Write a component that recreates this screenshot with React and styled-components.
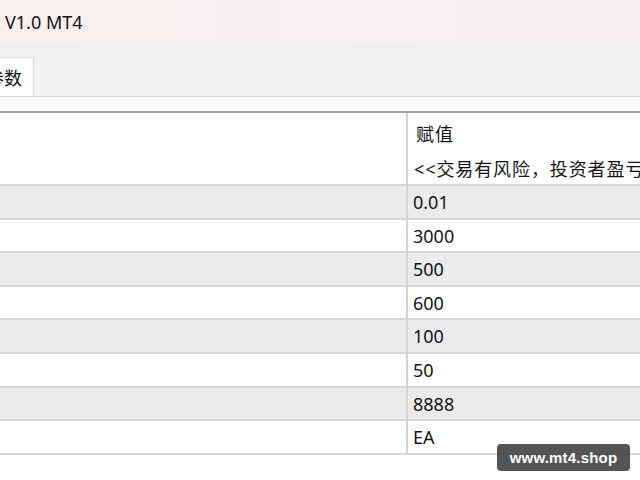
import React from "react";
import styled, { createGlobalStyle } from "styled-components";

const GlobalStyle = createGlobalStyle`
  html, body {
    margin: 0;
    padding: 0;
    background: #ffffff;
    overflow: hidden;
  }
  body {
    font-family: "Noto Sans", "Noto Sans CJK SC", sans-serif;
    color: #141414;
  }
`;

const Window = styled.div`
  position: relative;
  width: 640px;
  height: 480px;
  overflow: hidden;
  background: #ffffff;
`;

const TitleBar = styled.div`
  height: 43px;
  display: flex;
  align-items: center;
  padding-left: 5px;
  font-size: 18px;
  background: linear-gradient(90deg, #f9efee 0%, #f9eef0 60%, #f9ecf0 100%);
`;

const TabStrip = styled.div`
  height: 53px;
  display: flex;
  align-items: flex-end;
  background: #f0f0f0;
  border-bottom: 1px solid #d9d9d9;
`;

const Tab = styled.div`
  height: 38px;
  display: flex;
  align-items: center;
  margin-left: -14px;
  padding-right: 11px;
  background: #ffffff;
  border-right: 1px solid #d9d9d9;
  border-top: 1px solid #e3e3e3;
  font-size: 18px;
`;

const Gap = styled.div`
  height: 14px;
  background: #fbfbfb;
  border-bottom: 2px solid #a3a3a3;
`;

const Table = styled.div`
  display: grid;
  grid-template-columns: 408px 1fr;
  font-size: 18px;
`;

const Row = styled.div`
  display: contents;
`;

const Cell = styled.div`
  height: ${(p) => p.$h}px;
  box-sizing: border-box;
  display: flex;
  align-items: center;
  padding-left: ${(p) => p.$pad || 5}px;
  letter-spacing: ${(p) => (p.$wide ? 0.9 : 0)}px;
  white-space: nowrap;
  overflow: hidden;
  background: ${(p) => (p.$shade ? "#ebebeb" : "#ffffff")};
  border-bottom: ${(p) => (p.$line ? "2px solid #d6d6d6" : "none")};
  border-right: ${(p) => (p.$first ? "2px solid #d3d3d3" : "none")};
`;

const Watermark = styled.div`
  position: absolute;
  left: 497px;
  top: 444px;
  width: 133px;
  height: 27px;
  display: flex;
  align-items: center;
  justify-content: center;
  border-radius: 4px;
  background: rgba(70, 70, 70, 0.92);
  color: #ffffff;
  font-family: "Liberation Sans", Arial, sans-serif;
  font-weight: bold;
  font-size: 15px;
  letter-spacing: 0.2px;
`;

const rows = [
  { value: "0.01", h: 34 },
  { value: "3000", h: 33 },
  { value: "500", h: 34 },
  { value: "600", h: 33 },
  { value: "100", h: 34 },
  { value: "50", h: 34 },
  { value: "8888", h: 33 },
  { value: "EA", h: 34 },
];

export default function App() {
  return (
    <Window>
      <GlobalStyle />
      <TitleBar>V1.0 MT4</TitleBar>
      <TabStrip>
        <Tab>参数</Tab>
      </TabStrip>
      <Gap />
      <Table>
        <Row>
          <Cell $h={39} $first />
          <Cell $h={39} $pad={8} $wide>
            赋值
          </Cell>
        </Row>
        <Row>
          <Cell $h={34} $first $line />
          <Cell $h={34} $pad={6} $wide $line>
            &lt;&lt;交易有风险，投资者盈亏自负&gt;&gt;
          </Cell>
        </Row>
        {rows.map((r, i) => (
          <Row key={i}>
            <Cell $h={r.h} $first $line $shade={i % 2 === 0} />
            <Cell $h={r.h} $line $shade={i % 2 === 0}>
              {r.value}
            </Cell>
          </Row>
        ))}
      </Table>
      <Watermark>www.mt4.shop</Watermark>
    </Window>
  );
}
